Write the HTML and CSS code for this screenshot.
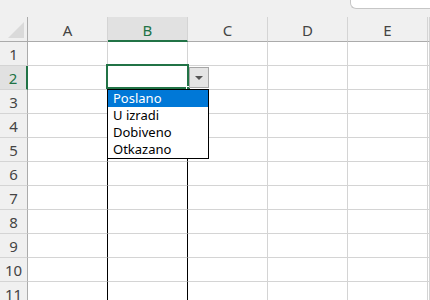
FILE: index.html
```html
<!DOCTYPE html>
<html>

<head>
	<title>Sheet</title>
	<link rel="stylesheet" href="styles.css">
</head>

<body>
	<div class="top">
		<div class="namebox"></div>
	</div>
	<div class="sheet">
		<div class="row head">
			<div class="corner"><div class="tri"></div></div>
			<div class="col">A</div>
			<div class="col sel">B</div>
			<div class="col">C</div>
			<div class="col">D</div>
			<div class="col">E</div>
			<div class="col"></div>
		</div>
		<div class="row">
			<div class="num">1</div>
			<div class="cell"></div><div class="cell"></div><div class="cell"></div><div class="cell"></div><div class="cell"></div><div class="cell"></div>
		</div>
		<div class="row">
			<div class="num sel">2</div>
			<div class="cell"></div>
			<div class="cell active">
				<div class="focus"></div>
				<div class="handle"></div>
				<div class="dropbtn"><span class="arrow"></span></div>
				<div class="list">
					<div class="item hl">Poslano</div>
					<div class="item">U izradi</div>
					<div class="item">Dobiveno</div>
					<div class="item">Otkazano</div>
				</div>
			</div>
			<div class="cell"></div><div class="cell"></div><div class="cell"></div><div class="cell"></div>
		</div>
		<div class="row boxed">
			<div class="num">3</div>
			<div class="cell"></div><div class="cell"></div><div class="cell"></div><div class="cell"></div><div class="cell"></div><div class="cell"></div>
		</div>
		<div class="row boxed">
			<div class="num">4</div>
			<div class="cell"></div><div class="cell"></div><div class="cell"></div><div class="cell"></div><div class="cell"></div><div class="cell"></div>
		</div>
		<div class="row boxed">
			<div class="num">5</div>
			<div class="cell"></div><div class="cell"></div><div class="cell"></div><div class="cell"></div><div class="cell"></div><div class="cell"></div>
		</div>
		<div class="row boxed">
			<div class="num">6</div>
			<div class="cell"></div><div class="cell"></div><div class="cell"></div><div class="cell"></div><div class="cell"></div><div class="cell"></div>
		</div>
		<div class="row boxed">
			<div class="num">7</div>
			<div class="cell"></div><div class="cell"></div><div class="cell"></div><div class="cell"></div><div class="cell"></div><div class="cell"></div>
		</div>
		<div class="row boxed">
			<div class="num">8</div>
			<div class="cell"></div><div class="cell"></div><div class="cell"></div><div class="cell"></div><div class="cell"></div><div class="cell"></div>
		</div>
		<div class="row boxed">
			<div class="num">9</div>
			<div class="cell"></div><div class="cell"></div><div class="cell"></div><div class="cell"></div><div class="cell"></div><div class="cell"></div>
		</div>
		<div class="row boxed">
			<div class="num">10</div>
			<div class="cell"></div><div class="cell"></div><div class="cell"></div><div class="cell"></div><div class="cell"></div><div class="cell"></div>
		</div>
		<div class="row boxed">
			<div class="num">11</div>
			<div class="cell"></div><div class="cell"></div><div class="cell"></div><div class="cell"></div><div class="cell"></div><div class="cell"></div>
		</div>
	</div>
</body>

</html>
```
FILE: styles.css
```css
html,
body {
	margin: 0;
	padding: 0;
	border: 0;
}

body {
	width: 430px;
	height: 300px;
	overflow: hidden;
	background: #fff;
	font-family: "Noto Sans", "Liberation Sans", sans-serif;
}

* {
	box-sizing: border-box;
}

.top {
	display: flex;
	justify-content: flex-end;
	height: 17px;
	background: #f0f0f0;
}

.namebox {
	width: 80px;
	height: 9px;
	background: #fff;
	border: 1px solid #c6c6c6;
	border-top: 0;
	border-right: 0;
	border-bottom-left-radius: 6px;
}

.row {
	display: flex;
	height: 24px;
}

.head {
	height: 25px;
	background: #f0f0f0;
}

.corner {
	flex: 0 0 28px;
	padding: 5px 0 0 8px;
	border-right: 1px solid #ababab;
	border-bottom: 1px solid #ababab;
}

.tri {
	width: 16px;
	height: 16px;
	background: #dadada;
	clip-path: polygon(100% 0, 100% 100%, 0 100%);
}

.col {
	flex: 0 0 80px;
	display: flex;
	justify-content: center;
	align-items: center;
	padding-top: 1px;
	font-size: 15px;
	color: #444;
	border-right: 1px solid #d4d4d4;
	border-bottom: 1px solid #ababab;
}

.col.sel {
	background: #e1e1e1;
	color: #217346;
	border-bottom: 2px solid #217346;
	padding-top: 2px;
}

.num {
	flex: 0 0 28px;
	display: flex;
	justify-content: center;
	align-items: center;
	font-size: 15px;
	color: #444;
	background: #f0f0f0;
	border-right: 1px solid #ababab;
	border-bottom: 1px solid #d4d4d4;
}

.num.sel {
	background: #e1e1e1;
	color: #217346;
	border-right: 2px solid #217346;
}

.cell {
	flex: 0 0 80px;
	border-right: 1px solid #d4d4d4;
	border-bottom: 1px solid #d4d4d4;
}

/* last partial column just fills what is left */
.row>*:last-child {
	flex: 1 1 0;
	min-width: 0;
}

.boxed .cell:nth-child(2),
.boxed .cell:nth-child(3) {
	border-right-color: #000;
}

.active {
	position: relative;
}

.focus {
	position: absolute;
	left: -2px;
	top: -2px;
	width: 83px;
	height: 25px;
	border: 2px solid #217346;
}

.handle {
	position: absolute;
	left: 78px;
	top: 20px;
	width: 5px;
	height: 5px;
	background: #217346;
	border: 1px solid #fff;
}

.dropbtn {
	position: absolute;
	left: 81px;
	top: 1px;
	width: 20px;
	height: 21px;
	display: flex;
	justify-content: center;
	align-items: center;
	background: #e5e5e5;
	border: 1px solid #a6a6a6;
}

.arrow {
	width: 0;
	height: 0;
	margin-top: 1px;
	border-left: 4px solid transparent;
	border-right: 4px solid transparent;
	border-top: 4px solid #555;
}

.list {
	position: absolute;
	left: -1px;
	top: 23px;
	width: 102px;
	z-index: 2;
	background: #fff;
	border: 1px solid #000;
}

.item {
	height: 17px;
	line-height: 17px;
	padding-left: 5px;
	font-size: 13px;
	color: #000;
}

.item.hl {
	background: #0078d7;
	color: #fff;
}
```
